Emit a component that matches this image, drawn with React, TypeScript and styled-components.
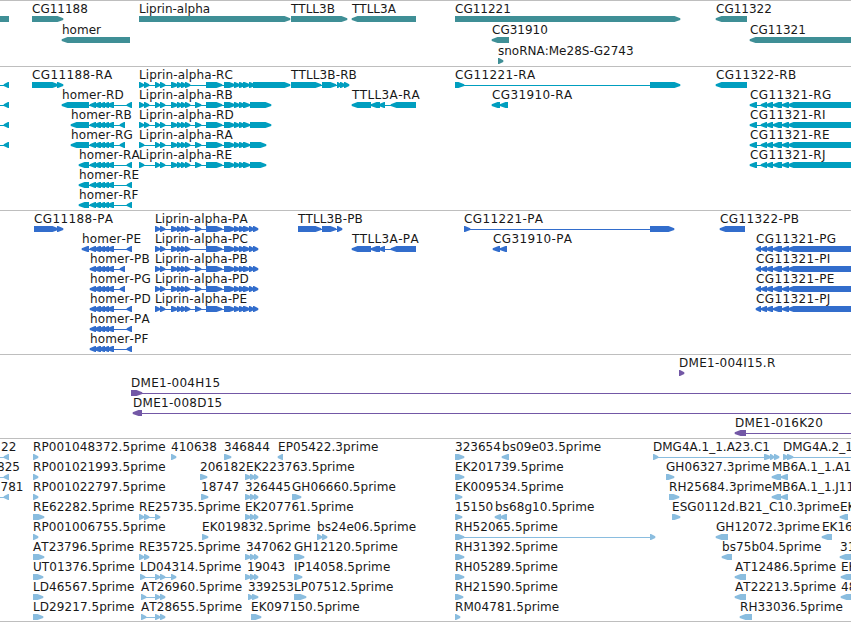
import styled, { createGlobalStyle } from 'styled-components';

type Span = [number, number];

interface Feature {
  name?: string;
  x: number;
  spans: Span[];
  strand?: '+' | '-' | '';
  // how far the connecting line runs past the last span
  to?: number;
  from?: number;
}

interface TrackData {
  color: string;
  pitch: number;
  height: number;
  rows: Feature[][];
}

const plus = (name: string, x: number, spans: Span[], to?: number): Feature => ({ name, x, spans, strand: '+', to });
const minus = (name: string, x: number, spans: Span[], to?: number): Feature => ({ name, x, spans, strand: '-', to });

const edge: Feature = { x: 0, spans: [[4, 9]], strand: '-', from: -2 };

const homerMid: Span[] = [[90, 96], [94, 101], [99, 105], [103, 109], [107, 114]];
const homer = (first: Span | null, last: Span): Span[] => [...(first ? [first] : []), ...homerMid, last];

const liprinA: Span[] = [[155, 160], [160, 165], [171, 178], [177, 182], [181, 186], [185, 190]];
const liprinB: Span[] = [[206, 222], [224, 235], [234, 240], [239, 245], [243, 250]];
const gap: Span = [195, 201];
const liprin = (head: Span[], middle: Span[], tail: Span[]): Span[] => [...head, ...liprinA, ...middle, ...liprinB, ...tail];
const twoHeads: Span[] = [[139, 144], [144, 149]];
const proteinTail: Span[] = [[249, 254], [253, 258]];

const ttll3a: Span[] = [[352, 371], [371, 380], [379, 385], [391, 416]];
const cg11321: Span[] = [[761, 767], [766, 773], [773, 782], [782, 789], [788, 870]];
const triple: Span[] = [[245, 251], [250, 255], [254, 258]];

const tracks: TrackData[] = [
  {
    color: '#3f8f96',
    pitch: 21,
    height: 66,
    rows: [
      [
        { x: 0, spans: [[-5, 9]], strand: '' },
        plus('CG11188', 32, [[32, 63]]),
        plus('Liprin-alpha', 139, [[139, 290]]),
        plus('TTLL3B', 291, [[291, 347]]),
        minus('TTLL3A', 352, [[352, 416]]),
        plus('CG11221', 455, [[455, 680]]),
        minus('CG11322', 716, [[716, 747]]),
      ],
      [minus('homer', 62, [[62, 130]]), minus('CG31910', 492, [[492, 509]]), minus('CG11321', 750, [[750, 870]])],
      [plus('snoRNA:Me28S-G2743', 498, [[498, 503]])],
    ],
  },
  {
    color: '#009ebf',
    pitch: 20,
    height: 144,
    rows: [
      [
        edge,
        plus('CG11188-RA', 32, [[32, 58], [57, 63]]),
        plus('Liprin-alpha-RC', 139, liprin(twoHeads, [], [[249, 255], [253, 290]])),
        plus('TTLL3B-RB', 291, [[291, 321], [322, 336], [337, 341], [340, 345], [344, 349]]),
        plus('CG11221-RA', 455, [[455, 464], [650, 680]]),
        minus('CG11322-RB', 716, [[716, 747]]),
      ],
      [
        edge,
        minus('homer-RD', 62, homer([62, 89], [127, 132])),
        plus('Liprin-alpha-RB', 139, liprin(twoHeads, [gap], [[250, 271]])),
        minus('TTLL3A-RA', 352, ttll3a),
        minus('CG31910-RA', 492, [[492, 500], [500, 508]]),
        minus('CG11321-RG', 750, [[750, 757], ...cg11321]),
      ],
      [
        edge,
        minus('homer-RB', 71, homer([71, 89], [120, 125])),
        plus('Liprin-alpha-RD', 139, liprin(twoHeads, [gap], [[250, 271]])),
        minus('CG11321-RI', 750, [[750, 757], ...cg11321]),
      ],
      [
        edge,
        minus('homer-RG', 71, homer([71, 89], [120, 125])),
        plus('Liprin-alpha-RA', 139, liprin([[139, 144]], [gap], [[250, 266]])),
        minus('CG11321-RE', 750, [[750, 757], ...cg11321]),
      ],
      [
        minus('homer-RA', 79, homer([79, 89], [127, 132])),
        plus('Liprin-alpha-RE', 139, liprin([[139, 144]], [gap], [[250, 266]])),
        minus('CG11321-RJ', 750, [[750, 757], ...cg11321]),
      ],
      [minus('homer-RE', 79, homer([79, 89], [127, 132]))],
      [minus('homer-RF', 79, homer([79, 89], [127, 132]))],
    ],
  },
  {
    color: '#326dcc',
    pitch: 20,
    height: 144,
    rows: [
      [
        plus('CG11188-PA', 34, [[34, 58], [57, 63]]),
        plus('Liprin-alpha-PA', 155, liprin([], [gap], proteinTail)),
        plus('TTLL3B-PB', 298, [[298, 321], [322, 336], [337, 342]]),
        plus('CG11221-PA', 464, [[464, 470], [650, 674]]),
        minus('CG11322-PB', 720, [[720, 745]]),
      ],
      [
        minus('homer-PE', 82, homer([82, 89], [127, 132])),
        plus('Liprin-alpha-PC', 155, liprin([], [], proteinTail)),
        minus('TTLL3A-PA', 352, ttll3a),
        minus('CG31910-PA', 493, [[493, 500], [500, 507]]),
        minus('CG11321-PG', 756, [[756, 761], ...cg11321]),
      ],
      [
        minus('homer-PB', 90, homer(null, [120, 125])),
        plus('Liprin-alpha-PB', 155, liprin([], [gap], proteinTail)),
        minus('CG11321-PI', 756, [[756, 761], ...cg11321]),
      ],
      [
        minus('homer-PG', 90, homer(null, [120, 125])),
        plus('Liprin-alpha-PD', 155, liprin([], [gap], proteinTail)),
        minus('CG11321-PE', 756, [[756, 761], ...cg11321]),
      ],
      [
        minus('homer-PD', 90, homer(null, [127, 132])),
        plus('Liprin-alpha-PE', 155, liprin([], [gap], proteinTail)),
        minus('CG11321-PJ', 756, [[756, 761], ...cg11321]),
      ],
      [minus('homer-PA', 90, homer(null, [127, 132]))],
      [minus('homer-PF', 90, homer(null, [127, 132]))],
    ],
  },
  {
    color: '#7358a6',
    pitch: 20,
    height: 84,
    rows: [
      [plus('DME1-004I15.R', 679, [[679, 684]])],
      [plus('DME1-004H15', 131, [[131, 142]], 870)],
      [minus('DME1-008D15', 133, [[133, 142]], 870)],
      [minus('DME1-016K20', 735, [[735, 746]], 870)],
    ],
  },
  {
    color: '#8abddf',
    pitch: 20,
    height: 183,
    rows: [
      [
        { ...edge, name: '22', x: 1 },
        plus('RP001048372.5prime', 33, [[33, 38]]),
        plus('410638', 171, [[171, 176]]),
        plus('346844', 224, [[224, 231]]),
        minus('EP05422.3prime', 278, [[278, 283]]),
        plus('323654', 455, [[455, 464]]),
        minus('bs09e03.5prime', 502, [[502, 509]]),
        plus('DMG4A.1_1.A23.C1', 653, [[653, 658], [764, 771], [770, 774], [774, 779]]),
        plus('DMG4A.2_1', 783, [[783, 788], [787, 793]], 870),
      ],
      [
        { ...edge, name: '825', x: -3 },
        plus('RP001021993.5prime', 33, [[33, 38]]),
        plus('206182', 200, [[200, 207]]),
        plus('EK223763.5prime', 246, triple),
        plus('EK201739.5prime', 455, [[455, 464]]),
        plus('GH06327.3prime', 666, [[666, 674]]),
        minus('MB6A.1_1.A1', 772, [[772, 781], [781, 788]]),
      ],
      [
        { ...edge, name: '781', x: 0.5 },
        plus('RP001022797.5prime', 33, [[33, 38]]),
        plus('18747', 201, [[201, 208]]),
        plus('326445', 245, triple),
        plus('GH06660.5prime', 292, [[292, 301]]),
        plus('EK009534.5prime', 455, [[455, 462]]),
        plus('RH25684.3prime', 669, [[669, 679]]),
        minus('MB6A.1_1.J11', 772, [[772, 781], [781, 788]]),
      ],
      [
        plus('RE62282.5prime', 33, [[33, 44]]),
        plus('RE25735.5prime', 139, [[139, 144], [144, 149], [155, 160]]),
        plus('EK207761.5prime', 245, triple),
        plus('15150', 455, [[455, 462]]),
        minus('bs68g10.5prime', 495, [[495, 501], [500, 507]]),
        plus('ESG0112d.B21_C10.3prime', 672, [[672, 680]]),
        minus('EK', 840, [[840, 848]]),
      ],
      [
        plus('RP001006755.5prime', 33, [[33, 38]]),
        plus('EK019832.5prime', 202, [[202, 208]]),
        plus('bs24e06.5prime', 317, [[317, 322], [322, 327]]),
        plus('RH52065.5prime', 455, [[455, 464], [650, 655]]),
        minus('GH12072.3prime', 716, [[716, 728]]),
        minus('EK16', 822, [[822, 832]]),
      ],
      [
        plus('AT23796.5prime', 33, [[33, 44]]),
        plus('RE35725.5prime', 139, twoHeads),
        plus('347062', 246, triple),
        plus('GH12120.5prime', 294, [[294, 304]]),
        plus('RH31392.5prime', 455, [[455, 464]]),
        minus('bs75b04.5prime', 722, [[722, 732]]),
        minus('31', 840, [[840, 851]]),
      ],
      [
        plus('UT01376.5prime', 33, [[33, 43]]),
        plus('LD04314.5prime', 140, [[140, 145], [155, 160], [160, 165], [171, 176]]),
        plus('19043', 247, triple),
        plus('IP14058.5prime', 294, [[294, 302]]),
        plus('RH05289.5prime', 455, [[455, 464]]),
        minus('AT12486.5prime', 735, [[735, 746]]),
        minus('EK', 841, [[841, 851]]),
      ],
      [
        plus('LD46567.5prime', 33, [[33, 43]]),
        plus('AT26960.5prime', 141, [[141, 146], [155, 160], [160, 165]]),
        plus('339253', 248, [[248, 253], [252, 258]]),
        plus('LP07512.5prime', 294, [[294, 306]]),
        plus('RH21590.5prime', 455, [[455, 463]]),
        minus('AT22213.5prime', 735, [[735, 746]]),
        minus('48', 841, [[841, 851]]),
      ],
      [
        plus('LD29217.5prime', 33, [[33, 43]]),
        plus('AT28655.5prime', 141, [[141, 146], [155, 160], [160, 165]]),
        plus('EK097150.5prime', 251, [[251, 261]]),
        plus('RM04781.5prime', 455, [[455, 460]]),
        minus('RH33036.5prime', 740, [[740, 752]]),
      ],
    ],
  },
];

const GlobalStyle = createGlobalStyle`
  body {
    margin: 0;
    background: white;
    overflow: hidden;
  }
`;

// block with a pointed end on the side of the strand
const spanPath = ([a, b]: Span, strand?: string) => {
  const tip = Math.min(5.5, b - a - 1);
  if (strand === '+') {
    return `M${a} 0H${b - tip}L${b + 0.3} 2.3V3.9L${b - tip} 6H${a}Z`;
  }
  if (strand === '-') {
    return `M${b} 0H${a + tip}L${a - 0.3} 2.3V3.9L${a + tip} 6H${b}Z`;
  }
  return `M${a} 0H${b}V6H${a}Z`;
};

// transcript, protein and clone names are set a little wider
const tracking = (name: string) => {
  if (/^(CG\d+|TTLL3A)-/.test(name)) return 0.38;
  if (/^DME1/.test(name)) return 0.27;
  if (/^RP\d/.test(name)) return 0.12;
  if (/-/.test(name) && !/^sno|alpha$/.test(name)) return 0.13;
  if (/prime$/.test(name)) return 0.07;
  return 0;
};

const Glyph = ({ feature }: { feature: Feature }) => {
  const { spans, strand, from, to } = feature;
  const start = from ?? spans[0][0];
  const end = to ?? spans[spans.length - 1][1];
  return (
    <g>
      {(spans.length > 1 || from !== undefined || to !== undefined) && (
        <rect x={start} y={3} width={end - start - (to ? 0 : 2)} height={1} />
      )}
      {spans.map((span) => (
        <path key={span[0]} d={spanPath(span, strand)} />
      ))}
    </g>
  );
};

const App = () => {
  return (
    <Browser>
      <GlobalStyle />
      {tracks.map((track) => (
        <Track key={track.color} $height={track.height}>
          {track.rows.map((row, index) => (
            <Row key={index} $pitch={track.pitch}>
              <Labels>
                {row.map((feature, i) => feature.name && (
                  <Label key={i} $tracking={tracking(feature.name)} style={{ left: feature.x }}>
                    {feature.name}
                  </Label>
                ))}
              </Labels>
              <Glyphs $color={track.color}>
                {row.map((feature, i) => <Glyph key={i} feature={feature} />)}
              </Glyphs>
            </Row>
          ))}
        </Track>
      ))}
    </Browser>
  );
};

export default App;

const Browser = styled.div`
  width: 851px;
  height: 622px;
  overflow: hidden;
  display: flex;
  flex-direction: column;
  border-bottom: 1px solid #bebebe;
  box-sizing: border-box;
`;

const Track = styled.div<{ $height: number }>`
  height: ${(props) => props.$height}px;
  flex: none;
  box-sizing: border-box;
  border-top: 1px solid #bebebe;
`;

const Row = styled.div<{ $pitch: number }>`
  height: ${(props) => props.$pitch}px;
  display: flex;
  flex-direction: column;
`;

const Labels = styled.div`
  position: relative;
  height: 15px;
  flex: none;
`;

// labels sit at the sequence position of their feature
const Label = styled.span<{ $tracking: number }>`
  position: absolute;
  top: 0;
  font-family: 'DejaVu Sans', sans-serif;
  font-size: 12px;
  font-kerning: none;
  letter-spacing: ${(props) => props.$tracking}px;
  line-height: 16px;
  white-space: nowrap;
  color: #181818;
`;

const Glyphs = styled.svg<{ $color: string }>`
  display: block;
  width: 851px;
  height: 6px;
  flex: none;
  fill: ${(props) => props.$color};
`;
